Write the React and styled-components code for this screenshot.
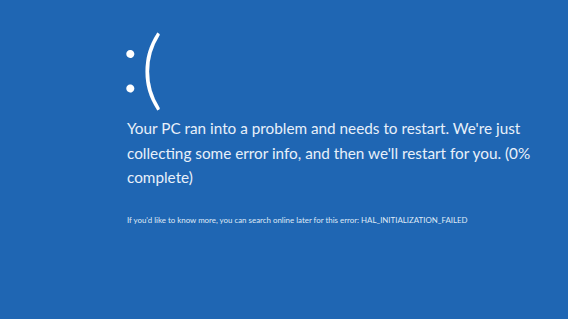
import React from "react";
import styled, { createGlobalStyle } from "styled-components";

const GlobalStyle = createGlobalStyle`
  html, body {
    margin: 0;
    padding: 0;
    background: #1f66b3;
  }
`;

const Screen = styled.div`
  width: 568px;
  height: 319px;
  background: #1f66b3;
  color: #ffffff;
  font-family: "Lato", "Open Sans", sans-serif;
  display: flex;
  flex-direction: column;
  padding: 16px 0 0 127px;
  box-sizing: border-box;
  overflow: hidden;
`;

const Frown = styled.div`
  height: 100px;
  font-size: 86px;
  line-height: 100px;
  font-weight: 300;
  margin-left: -7px;
`;

const Eyes = styled.span`
  line-height: 0;
  vertical-align: 7px;
`;

const Message = styled.p`
  margin: 0;
  font-size: 15.3px;
  line-height: 24.5px;
  font-weight: 400;
  color: #e8f0fa;
  white-space: nowrap;
`;

const Detail = styled.p`
  margin: 25px 0 0;
  font-size: 7.9px;
  line-height: 10px;
  color: #dfe9f6;
  white-space: nowrap;
`;

export default function App() {
  return (
    <>
      <GlobalStyle />
      <Screen>
        <Frown>
          <Eyes>:</Eyes>(
        </Frown>
        <Message>
          Your PC ran into a problem and needs to restart. We're just
          <br />
          collecting some error info, and then we'll restart for you. (0%
          <br />
          complete)
        </Message>
        <Detail>
          If you'd like to know more, you can search online later for this
          error: HAL_INITIALIZATION_FAILED
        </Detail>
      </Screen>
    </>
  );
}
